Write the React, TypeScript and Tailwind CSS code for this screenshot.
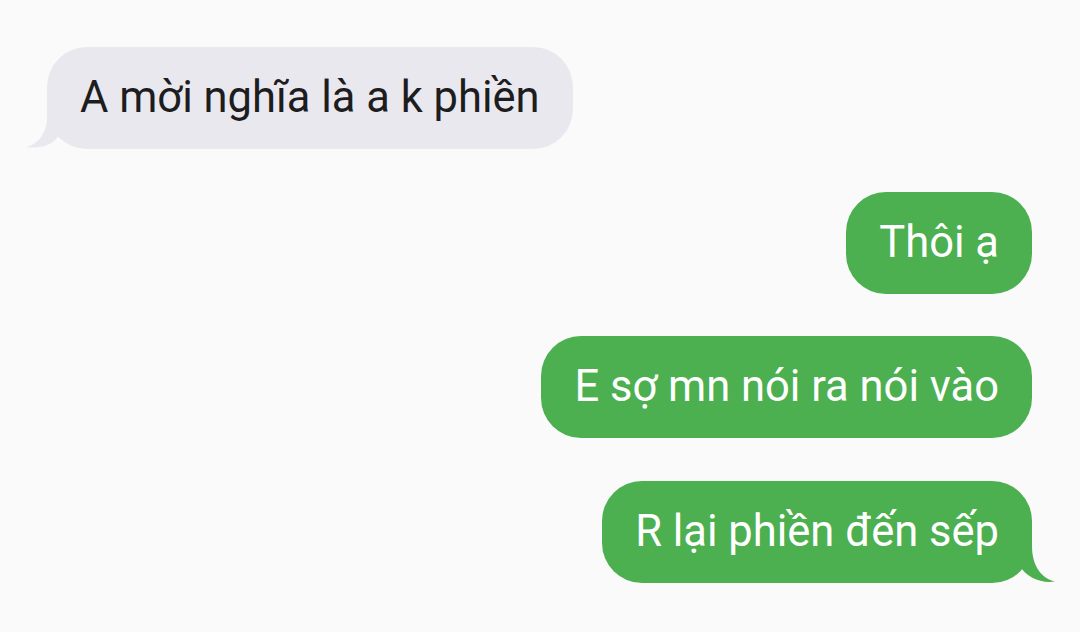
import React from "react";

function LeftTail() {
  return (
    <svg className="absolute left-[-21px] bottom-0" width="46" height="40" viewBox="0 0 46 40">
      <path d="M46,0 L21,0 L21,8 C21,22 14,35 0,38 C14,40 28,37 35,23 L46,23 Z" fill="#e9e8ee" />
    </svg>
  );
}

function RightTail() {
  return (
    <svg className="absolute right-[-26px] bottom-[-1px]" width="49" height="56" viewBox="0 0 49 56">
      <path d="M0,0 L23,0 L23,18 C23,36 31,50 46,53.5 C32,55.5 18,50 10,37 L0,37 Z" fill="#4caf50" />
    </svg>
  );
}

function Bubble({ text, side, tail }: { text: string; side: "left" | "right"; tail?: boolean }) {
  const isLeft = side === "left";
  return (
    <div className={isLeft ? "flex justify-start" : "flex justify-end"}>
      <div
        className={
          "relative h-[102px] rounded-[40px] flex items-center px-[33px] text-[43.5px] " +
          (isLeft ? "bg-[#e9e8ee] text-[#1d1d1f]" : "bg-[#4caf50] text-white")
        }
      >
        {tail && (isLeft ? <LeftTail /> : <RightTail />)}
        <span className="relative whitespace-nowrap">{text}</span>
      </div>
    </div>
  );
}

export default function App() {
  return (
    <div
      className="w-[1080px] h-[632px] bg-[#fafafa] overflow-hidden pt-[47px] pl-[47px] pr-[48px] flex flex-col gap-[42.5px]"
      style={{ fontFamily: "Roboto, 'Noto Sans', sans-serif" }}
    >
      <Bubble text="A mời nghĩa là a k phiền" side="left" tail />
      <Bubble text="Thôi ạ" side="right" />
      <Bubble text="E sợ mn nói ra nói vào" side="right" />
      <Bubble text="R lại phiền đến sếp" side="right" tail />
    </div>
  );
}
